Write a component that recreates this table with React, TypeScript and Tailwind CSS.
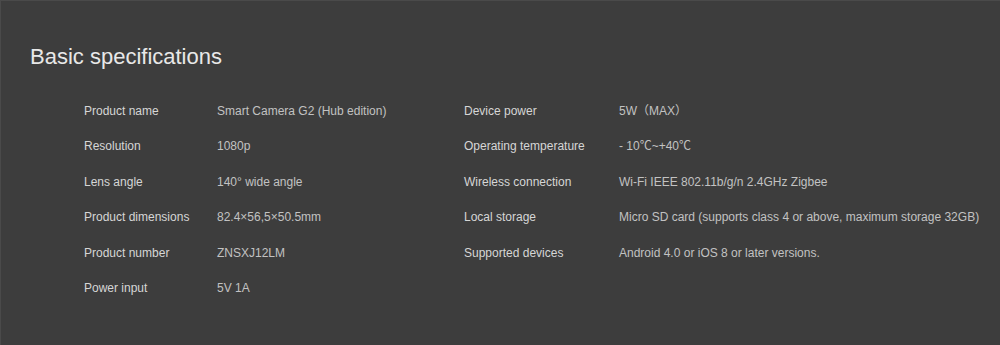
import React from "react";

const left: [string, string][] = [
  ["Product name", "Smart Camera G2 (Hub edition)"],
  ["Resolution", "1080p"],
  ["Lens angle", "140° wide angle"],
  ["Product dimensions", "82.4×56,5×50.5mm"],
  ["Product number", "ZNSXJ12LM"],
  ["Power input", "5V 1A"],
];

const right: [string, string][] = [
  ["Device power", "5W（MAX）"],
  ["Operating temperature", "- 10℃~+40℃"],
  ["Wireless connection", "Wi-Fi IEEE 802.11b/g/n 2.4GHz Zigbee"],
  ["Local storage", "Micro SD card (supports class 4 or above, maximum storage 32GB)"],
  ["Supported devices", "Android 4.0 or iOS 8 or later versions."],
];

function Column({ rows, labelW }: { rows: [string, string][]; labelW: string }) {
  return (
    <div className="flex flex-col">
      {rows.map(([k, v]) => (
        <div key={k} className="flex h-[35.4px] items-center text-[12px] whitespace-nowrap">
          <div className={`${labelW} shrink-0 text-[#d6d6d6]`}>{k}</div>
          <div className="text-[#c2c2c2]">{v}</div>
        </div>
      ))}
    </div>
  );
}

export default function App() {
  return (
    <div
      className="h-[345px] w-full overflow-hidden border-t border-l border-[#4a4a4a] bg-[#3d3d3d]"
      style={{ fontFamily: '"Liberation Sans", Arial, "Noto Sans CJK SC", sans-serif' }}
    >
      <div className="pl-[29px] pt-[38.8px]">
        <h1 className="text-[22px] leading-normal font-normal text-[#e8e8e8]">Basic specifications</h1>
        <div className="mt-[20.5px] ml-[54px] flex">
          <div className="w-[380px] shrink-0">
            <Column rows={left} labelW="w-[133px]" />
          </div>
          <Column rows={right} labelW="w-[155px]" />
        </div>
      </div>
    </div>
  );
}
